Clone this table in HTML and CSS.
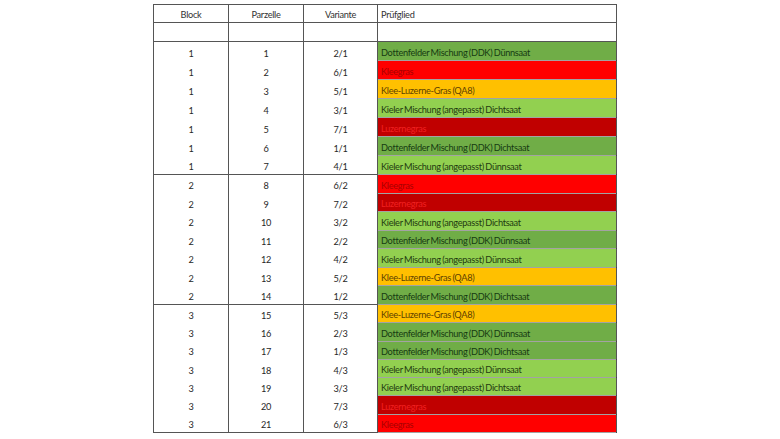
FILE: index.html
```html
<!DOCTYPE html>
<html lang="de">
<head>
<meta charset="utf-8">
<title>Versuchsplan</title>
<link rel="stylesheet" href="styles.css">
</head>
<body>
<div class="page">
<table class="plan">
<colgroup><col class="c1"><col class="c2"><col class="c3"><col class="c4"></colgroup>
<thead>
<tr class="hrow"><th>Block</th><th>Parzelle</th><th>Variante</th><th class="pg">Prüfglied</th></tr>
<tr class="erow"><th></th><th></th><th></th><th class="pg"></th></tr>
</thead>
<tbody class="b1">
<tr><td>1</td><td>1</td><td>2/1</td><td class="pg ddk">Dottenfelder Mischung (DDK) Dünnsaat</td></tr>
<tr><td>1</td><td>2</td><td>6/1</td><td class="pg kg">Kleegras</td></tr>
<tr><td>1</td><td>3</td><td>5/1</td><td class="pg klg">Klee-Luzerne-Gras (QA8)</td></tr>
<tr><td>1</td><td>4</td><td>3/1</td><td class="pg kiel">Kieler Mischung (angepasst) Dichtsaat</td></tr>
<tr><td>1</td><td>5</td><td>7/1</td><td class="pg lz">Luzernegras</td></tr>
<tr><td>1</td><td>6</td><td>1/1</td><td class="pg ddk">Dottenfelder Mischung (DDK) Dichtsaat</td></tr>
<tr><td>1</td><td>7</td><td>4/1</td><td class="pg kiel">Kieler Mischung (angepasst) Dünnsaat</td></tr>
</tbody>
<tbody class="b2">
<tr><td>2</td><td>8</td><td>6/2</td><td class="pg kg">Kleegras</td></tr>
<tr><td>2</td><td>9</td><td>7/2</td><td class="pg lz">Luzernegras</td></tr>
<tr><td>2</td><td>10</td><td>3/2</td><td class="pg kiel">Kieler Mischung (angepasst) Dichtsaat</td></tr>
<tr><td>2</td><td>11</td><td>2/2</td><td class="pg ddk">Dottenfelder Mischung (DDK) Dünnsaat</td></tr>
<tr><td>2</td><td>12</td><td>4/2</td><td class="pg kiel">Kieler Mischung (angepasst) Dünnsaat</td></tr>
<tr><td>2</td><td>13</td><td>5/2</td><td class="pg klg">Klee-Luzerne-Gras (QA8)</td></tr>
<tr><td>2</td><td>14</td><td>1/2</td><td class="pg ddk">Dottenfelder Mischung (DDK) Dichtsaat</td></tr>
</tbody>
<tbody class="b3">
<tr><td>3</td><td>15</td><td>5/3</td><td class="pg klg">Klee-Luzerne-Gras (QA8)</td></tr>
<tr><td>3</td><td>16</td><td>2/3</td><td class="pg ddk">Dottenfelder Mischung (DDK) Dünnsaat</td></tr>
<tr><td>3</td><td>17</td><td>1/3</td><td class="pg ddk">Dottenfelder Mischung (DDK) Dichtsaat</td></tr>
<tr><td>3</td><td>18</td><td>4/3</td><td class="pg kiel">Kieler Mischung (angepasst) Dünnsaat</td></tr>
<tr><td>3</td><td>19</td><td>3/3</td><td class="pg kiel">Kieler Mischung (angepasst) Dichtsaat</td></tr>
<tr><td>3</td><td>20</td><td>7/3</td><td class="pg lz">Luzernegras</td></tr>
<tr><td>3</td><td>21</td><td>6/3</td><td class="pg kg">Kleegras</td></tr>
</tbody>
</table>
</div>
</body>
</html>
```
FILE: styles.css
```css
html, body {
  margin: 0;
  padding: 0;
  background: #ffffff;
}
.page {
  padding: 4px 0 0 153px;
}
.plan {
  border-collapse: collapse;
  table-layout: fixed;
  width: 463px;
  font-family: Lato, "Open Sans", sans-serif;
  font-size: 9.2px;
  letter-spacing: -0.3px;
  word-spacing: -0.6px;
  color: #262626;
  border: 1px solid #555555;
}
.c1 { width: 75px; }
.c2 { width: 75px; }
.c3 { width: 74px; }
.c4 { width: 239px; }
.plan th, .plan td {
  padding: 0 0 2px 0;
  text-align: center;
  vertical-align: bottom;
  font-weight: normal;
  border-left: 1px solid #555555;
  border-right: 1px solid #555555;
  white-space: nowrap;
  overflow: hidden;
  line-height: 11px;
}
.plan th {
  border-bottom: 1px solid #555555;
  color: #333333;
}
.hrow { height: 18px; }
.erow { height: 19px; }
.b1 tr { height: 19px; }
.b2 tr { height: 18.57px; }
.b3 tr { height: 18.29px; }
.b2 tr:first-child td,
.b3 tr:first-child td {
  border-top: 1px solid #555555;
}
.plan .pg {
  text-align: left;
  padding-left: 3px;
}
.plan td.pg {
  border-bottom: 1px solid rgba(50, 50, 50, 0.45);
}
.ddk { background: #70ad47; color: #163a12; }
.kiel { background: #92d050; color: #1f3a10; }
.klg { background: #ffc000; color: #5e3f00; }
.kg { background: #ff0000; color: #a80000; }
.lz { background: #c00000; color: #f02020; }
```
